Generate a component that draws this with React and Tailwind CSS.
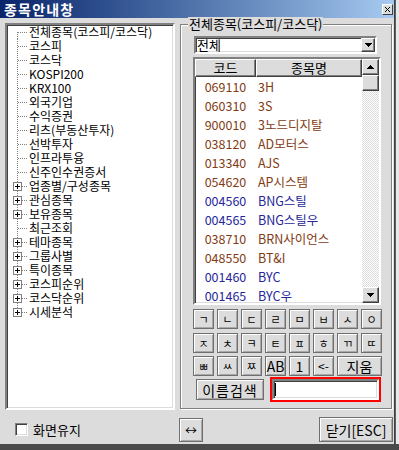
import React from "react";

const tree = [
  ["전체종목(코스피/코스닥)", false],
  ["코스피", false],
  ["코스닥", false],
  ["KOSPI200", false],
  ["KRX100", false],
  ["외국기업", false],
  ["수익증권", false],
  ["리츠(부동산투자)", false],
  ["선박투자", false],
  ["인프라투융", false],
  ["신주인수권증서", false],
  ["업종별/구성종목", true],
  ["관심종목", true],
  ["보유종목", true],
  ["최근조회", false],
  ["테마종목", true],
  ["그룹사별", true],
  ["특이종목", true],
  ["코스피순위", true],
  ["코스닥순위", true],
  ["시세분석", true],
];

const rows = [
  ["069110", "3H", "b"],
  ["060310", "3S", "b"],
  ["900010", "3노드디지탈", "b"],
  ["038120", "AD모터스", "b"],
  ["013340", "AJS", "b"],
  ["054620", "AP시스템", "b"],
  ["004560", "BNG스틸", "u"],
  ["004565", "BNG스틸우", "u"],
  ["038710", "BRN사이언스", "b"],
  ["048550", "BT&I", "b"],
  ["001460", "BYC", "u"],
  ["001465", "BYC우", "u"],
];

const keys1 = ["ㄱ", "ㄴ", "ㄷ", "ㄹ", "ㅁ", "ㅂ", "ㅅ", "ㅇ"];
const keys2 = ["ㅈ", "ㅊ", "ㅋ", "ㅌ", "ㅍ", "ㅎ", "ㄲ", "ㄸ"];

const btn =
  "bg-[#dcdcdc] border border-[#6f6f6f] shadow-[inset_1px_1px_0_#ffffff,inset_-1px_-1px_0_#a8a8a8] flex items-center justify-center text-black";
const sunken =
  "border border-t-[#808080] border-l-[#808080] border-r-white border-b-white shadow-[inset_1px_1px_0_#404040,inset_-1px_-1px_0_#dcdcdc]";
const raised =
  "bg-[#dcdcdc] border border-t-white border-l-white border-r-[#404040] border-b-[#404040] shadow-[inset_-1px_-1px_0_#808080]";

function Connector({ first, last, plus }) {
  return (
    <svg width="22" height="14" className="shrink-0" shapeRendering="crispEdges">
      <line x1="10.5" y1={first ? 7 : 0} x2="10.5" y2={last ? 8 : 14} stroke="#808080" strokeDasharray="1 1" />
      <line x1="11" y1="7.5" x2="21" y2="7.5" stroke="#808080" strokeDasharray="1 1" />
      {plus && (
        <g>
          <rect x="6.5" y="3.5" width="8" height="8" fill="#ffffff" stroke="#808080" />
          <line x1="8" y1="7.5" x2="13" y2="7.5" stroke="#000" />
          <line x1="10.5" y1="5" x2="10.5" y2="10" stroke="#000" />
        </g>
      )}
    </svg>
  );
}

export default function App() {
  return (
    <div className="w-[399px] h-[450px] bg-[#4a4a4a] flex flex-col overflow-hidden font-['Noto_Sans_CJK_KR',sans-serif] text-black select-none">
      <div className="flex h-[444px]">
        <div className="w-[395px] h-full bg-[#dcdcdc] flex flex-col border-r border-[#404040]">
          {/* title bar */}
          <div className="h-[18px] bg-linear-to-r from-[#0a246a] to-[#a6caf0] flex items-center justify-between pl-[4px] pr-[1px]">
            <span className="text-white font-bold text-[14px] leading-[16px] tracking-[1.2px]">종목안내창</span>
            <div className="w-[11px] h-[11px] bg-[#dcdcdc] border border-t-white border-l-white border-r-[#404040] border-b-[#404040] flex items-center justify-center">
              <svg width="7" height="7" shapeRendering="crispEdges">
                <path d="M1 1 L6 6 M6 1 L1 6" stroke="#000" strokeWidth="1.3" />
              </svg>
            </div>
          </div>

          {/* main row */}
          <div className="flex pt-[5px] pl-[5px]">
            {/* tree */}
            <div className={`w-[170px] h-[387px] bg-white ${sunken} border-2`}>
              <div className="flex flex-col">
                {tree.map(([t, p], i) => (
                  <div key={i} className="flex items-center h-[14px]">
                    <Connector first={i === 0} last={i === tree.length - 1} plus={p} />
                    <span className="text-[12px] leading-[14px] whitespace-nowrap">{t}</span>
                  </div>
                ))}
              </div>
            </div>

            {/* group box */}
            <div className="relative ml-[5px] mt-[1px] w-[212px] h-[385px] border border-[#808080] shadow-[inset_1px_1px_0_#ffffff,1px_1px_0_#ffffff] pt-[11px] pl-[12px] flex flex-col">
              <span className="absolute left-[7px] top-[-8px] bg-[#dcdcdc] px-[1px] text-[13px] leading-[14px] whitespace-nowrap">
                전체종목(코스피/코스닥)
              </span>

              {/* combo */}
              <div className={`ml-[1px] w-[183px] h-[18px] bg-white ${sunken} border-2 flex items-center`}>
                <span className="flex-1 pl-[1px] text-[13px] leading-[14px]">전체</span>
                <div className={`w-[14px] h-[14px] ${raised} flex items-center justify-center`}>
                  <svg width="7" height="4" shapeRendering="crispEdges">
                    <path d="M0 0 H7 L3.5 4 Z" fill="#000" />
                  </svg>
                </div>
              </div>

              {/* list */}
              <div className={`mt-[3px] w-[188px] h-[248px] bg-white ${sunken} border-2 flex overflow-hidden`}>
                <div className="flex-1 flex flex-col overflow-hidden">
                  <div className="flex h-[18px] shrink-0">
                    <div className={`w-[61px] ${raised} text-[13px] leading-[14px] flex items-center justify-center`}>
                      코드
                    </div>
                    <div className={`flex-1 ${raised} text-[13px] leading-[14px] flex items-center justify-center`}>
                      종목명
                    </div>
                  </div>
                  <div className="flex flex-col">
                    {rows.map(([c, n, col], i) => (
                      <div
                        key={i}
                        className={`flex h-[19px] shrink-0 items-center text-[12.5px] leading-[14px] ${
                          col === "b" ? "text-[#823c14]" : "text-[#26269a]"
                        }`}
                      >
                        <span className="w-[61px] text-center">{c}</span>
                        <span className="pl-[2px] whitespace-nowrap">{n}</span>
                      </div>
                    ))}
                  </div>
                </div>
                {/* scrollbar */}
                <div className="w-[17px] flex flex-col shrink-0">
                  <div className={`h-[16px] ${raised} flex items-center justify-center`}>
                    <svg width="7" height="4" shapeRendering="crispEdges">
                      <path d="M3.5 0 L7 4 H0 Z" fill="#000" />
                    </svg>
                  </div>
                  <div className={`h-[16px] ${raised}`}></div>
                  <div className="flex-1 bg-[repeating-conic-gradient(#dcdcdc_0_25%,#ffffff_0_50%)] bg-size-[2px_2px]"></div>
                  <div className={`h-[16px] ${raised} flex items-center justify-center`}>
                    <svg width="7" height="4" shapeRendering="crispEdges">
                      <path d="M0 0 H7 L3.5 4 Z" fill="#000" />
                    </svg>
                  </div>
                </div>
              </div>

              {/* keypad */}
              <div className="mt-[4px] flex gap-[3px]">
                {keys1.map((k) => (
                  <div key={k} className={`w-[21px] h-[20px] ${btn} text-[11px]`}>{k}</div>
                ))}
              </div>
              <div className="mt-[4px] flex gap-[3px]">
                {keys2.map((k) => (
                  <div key={k} className={`w-[21px] h-[20px] ${btn} text-[11px]`}>{k}</div>
                ))}
              </div>
              <div className="mt-[3px] flex gap-[3px]">
                <div className={`w-[21px] h-[20px] ${btn} text-[11px]`}>ㅃ</div>
                <div className={`w-[21px] h-[20px] ${btn} text-[11px]`}>ㅆ</div>
                <div className={`w-[21px] h-[20px] ${btn} text-[11px]`}>ㅉ</div>
                <div className={`w-[21px] h-[20px] ${btn} text-[14px]`}>AB</div>
                <div className={`w-[21px] h-[20px] ${btn} text-[14px]`}>1</div>
                <div className={`w-[21px] h-[20px] ${btn} text-[12px]`}>&lt;-</div>
                <div className={`w-[45px] h-[20px] ${btn} text-[14px]`}>지움</div>
              </div>

              {/* search */}
              <div className="mt-[1px] flex items-center h-[25px]">
                <div className={`ml-[3px] w-[68px] h-[21px] ${btn} bg-[#d4d0c8] text-[14px] leading-[16px] tracking-[1px]`}>
                  이름검색
                </div>
                <div className="ml-[6px] w-[111px] h-[25px] border-2 border-[#ff0000]">
                  <div className={`w-full h-full bg-white ${sunken} border-2 flex items-center pl-[1px]`}>
                    <div className="w-[1px] h-[13px] bg-black"></div>
                  </div>
                </div>
              </div>
            </div>
          </div>

          {/* bottom row */}
          <div className="mt-[7px] h-[25px] flex items-center">
            <div className="w-[179px] flex items-center">
              <div className={`ml-[15px] w-[13px] h-[13px] bg-white ${sunken}`}></div>
              <span className="ml-[5px] text-[13px] leading-[14px]">화면유지</span>
            </div>
            <div className={`w-[24px] h-[24px] ${btn} text-[12px]`}>↔</div>
            <div className={`ml-auto mr-[1px] w-[74px] h-[25px] ${btn} text-[14px] leading-[16px]`}>
              닫기[ESC]
            </div>
          </div>
        </div>
        <div className="flex-1 bg-[#e8e8e8] border-l border-[#606060]"></div>
      </div>
    </div>
  );
}
